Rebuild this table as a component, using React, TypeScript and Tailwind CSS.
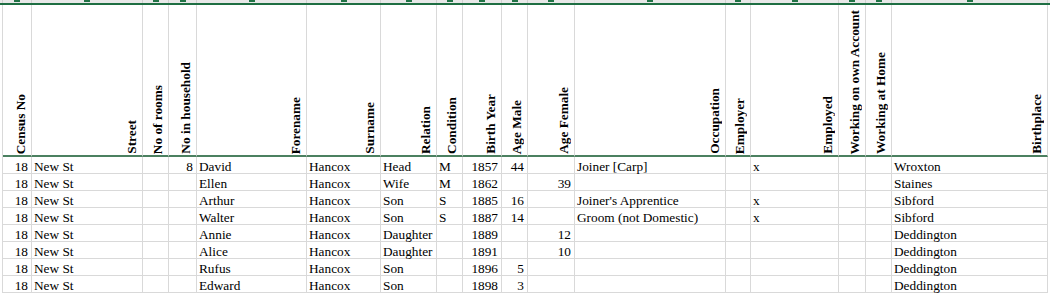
const cols = [
  { label: 'Census No', align: 'right' },
  { label: 'Street', align: 'left' },
  { label: 'No of rooms', align: 'right' },
  { label: 'No in household', align: 'right' },
  { label: 'Forename', align: 'left' },
  { label: 'Surname', align: 'left' },
  { label: 'Relation', align: 'left' },
  { label: 'Condition', align: 'left' },
  { label: 'Birth Year', align: 'right' },
  { label: 'Age Male', align: 'right' },
  { label: 'Age Female', align: 'right' },
  { label: 'Occupation', align: 'left' },
  { label: 'Employer', align: 'left' },
  { label: 'Employed', align: 'left' },
  { label: 'Working on own Account', align: 'left' },
  { label: 'Working at Home', align: 'left' },
  { label: 'Birthplace', align: 'left' },
];

const rows: string[][] = [
  ['18', 'New St', '', '8', 'David', 'Hancox', 'Head', 'M', '1857', '44', '', 'Joiner [Carp]', '', 'x', '', '', 'Wroxton'],
  ['18', 'New St', '', '', 'Ellen', 'Hancox', 'Wife', 'M', '1862', '', '39', '', '', '', '', '', 'Staines'],
  ['18', 'New St', '', '', 'Arthur', 'Hancox', 'Son', 'S', '1885', '16', '', "Joiner's Apprentice", '', 'x', '', '', 'Sibford'],
  ['18', 'New St', '', '', 'Walter', 'Hancox', 'Son', 'S', '1887', '14', '', 'Groom (not Domestic)', '', 'x', '', '', 'Sibford'],
  ['18', 'New St', '', '', 'Annie', 'Hancox', 'Daughter', '', '1889', '', '12', '', '', '', '', '', 'Deddington'],
  ['18', 'New St', '', '', 'Alice', 'Hancox', 'Daughter', '', '1891', '', '10', '', '', '', '', '', 'Deddington'],
  ['18', 'New St', '', '', 'Rufus', 'Hancox', 'Son', '', '1896', '5', '', '', '', '', '', '', 'Deddington'],
  ['18', 'New St', '', '', 'Edward', 'Hancox', 'Son', '', '1898', '3', '', '', '', '', '', '', 'Deddington'],
];

const gridCols =
  'grid grid-cols-[29px_111px_26px_28px_110px_74px_56px_26px_39px_26px_47px_151px_25px_88px_27px_26px_156px]';

export default function App() {
  return (
    <div className="w-[1050px] h-[294px] overflow-hidden bg-white font-['Liberation_Serif',serif] text-[13.3px] text-black">
      {/* column letter strip, cut off at the top */}
      <div className="flex h-[3px] bg-[#e8e8e8] pl-[2px]">
        <div className={`${gridCols} border-l border-[#d0d0d0]`}>
          {cols.map((c) => (
            <div key={c.label} className="flex justify-center border-r border-[#d0d0d0]">
              <div className="w-[6px] h-[2px] bg-[#217346]" />
            </div>
          ))}
        </div>
      </div>
      <div className="h-[2px] bg-[#1e6e42]" />

      <div className="pl-[2px]">
        <div className={`${gridCols} border-l border-[#d9d9d9]`}>
          {cols.map((c) => (
            <div
              key={c.label}
              className="h-[152px] flex items-end justify-end border-r border-[#d9d9d9] border-b-2 border-b-[#4b8060] pr-[3px] pb-[1px]"
            >
              <span className="[writing-mode:vertical-rl] rotate-180 font-bold leading-[15px] whitespace-nowrap">
                {c.label}
              </span>
            </div>
          ))}

          {rows.map((r, i) =>
            r.map((v, j) => (
              <div
                key={`${i}-${j}`}
                className={`h-[17px] flex items-end border-r border-b border-[#d9d9d9] whitespace-nowrap leading-[13px] ${
                  cols[j].align === 'right' ? 'justify-end pr-[3px]' : 'justify-start pl-[2px]'
                }`}
              >
                {v}
              </div>
            ))
          )}
        </div>
      </div>
    </div>
  );
}
